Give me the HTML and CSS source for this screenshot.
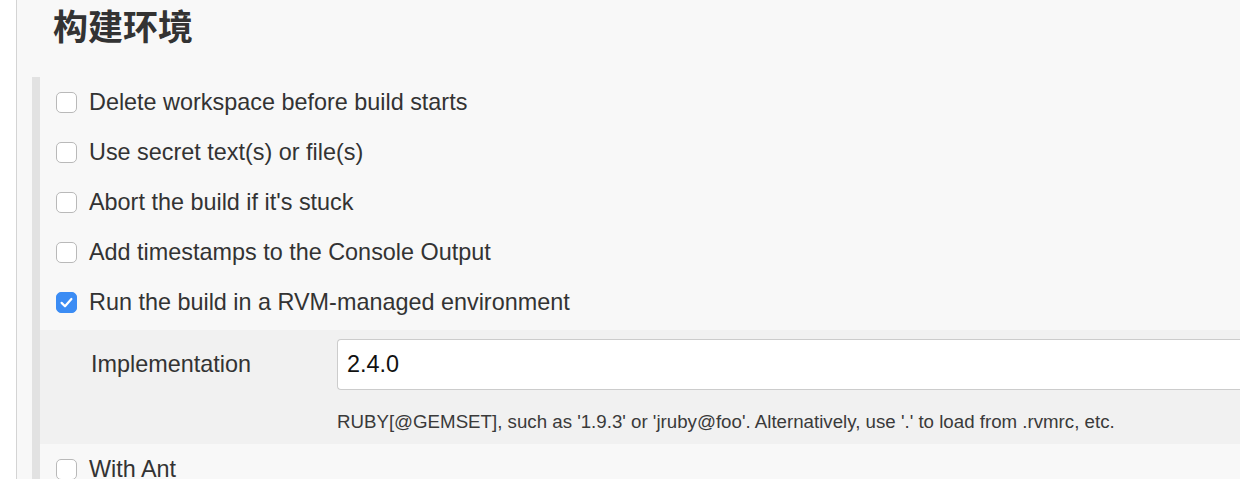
FILE: index.html
```html
<!DOCTYPE html>
<html lang="zh">
<head>
<meta charset="utf-8">
<title>构建环境</title>
<link rel="stylesheet" href="styles.css">
</head>
<body>
<div class="page">
  <h2 class="title">构建环境</h2>
  <div class="section">
    <label class="row"><span class="cb"></span><span class="lbl">Delete workspace before build starts</span></label>
    <label class="row"><span class="cb"></span><span class="lbl">Use secret text(s) or file(s)</span></label>
    <label class="row"><span class="cb"></span><span class="lbl">Abort the build if it's stuck</span></label>
    <label class="row"><span class="cb"></span><span class="lbl">Add timestamps to the Console Output</span></label>
    <label class="row"><span class="cb checked"><svg viewBox="0 0 21 21" width="21" height="21"><path d="M5.6 10.9 L9 14.3 L15.4 7" fill="none" stroke="#fff" stroke-width="2.2" stroke-linecap="round" stroke-linejoin="round"/></svg></span><span class="lbl">Run the build in a RVM-managed environment</span></label>
    <div class="sub">
      <div class="field">
        <div class="flabel">Implementation</div>
        <div class="finput">2.4.0</div>
      </div>
      <div class="help">RUBY[@GEMSET], such as '1.9.3' or 'jruby@foo'. Alternatively, use '.' to load from .rvmrc, etc.</div>
    </div>
    <label class="row"><span class="cb"></span><span class="lbl">With Ant</span></label>
  </div>
</div>
</body>
</html>
```

FILE: styles.css
```css
html, body {
  margin: 0;
  padding: 0;
  background: #ffffff;
  overflow: hidden;
}
body {
  font-family: "Liberation Sans", Arial, "Noto Sans CJK SC", sans-serif;
  color: #333333;
}
.page {
  margin-left: 16px;
  border-left: 1px solid #d4d4d4;
  background: #f8f8f8;
  min-height: 479px;
}
.title {
  margin: 0;
  padding: 2px 0 0 36px;
  height: 77px;
  box-sizing: border-box;
  font-family: "Noto Sans CJK SC", sans-serif;
  font-size: 35px;
  font-weight: 700;
  line-height: 46px;
  color: #333333;
}
.section {
  margin-left: 15px;
  border-left: 8px solid #e2e2e2;
}
.row {
  display: flex;
  align-items: center;
  height: 50px;
  padding-left: 16px;
  font-size: 23.4px;
}
.cb {
  width: 21px;
  height: 21px;
  box-sizing: border-box;
  border: 1px solid #b9b9b9;
  border-radius: 5px;
  background: #ffffff;
  margin-right: 12px;
  flex: none;
}
.cb svg { display: block; margin: -1px; }
.cb.checked {
  background: #3b8cf4;
  border-color: #3b8cf4;
}
.sub {
  margin-top: 3px;
  background: #f1f1f1;
  height: 114px;
  padding-top: 9px;
  box-sizing: border-box;
}
.field {
  display: grid;
  grid-template-columns: 246px 1fr;
  align-items: center;
  padding-left: 51px;
}
.flabel {
  font-size: 23.4px;
}
.finput {
  height: 51px;
  box-sizing: border-box;
  border: 1px solid #cccccc;
  border-right: none;
  border-radius: 4px 0 0 4px;
  background: #ffffff;
  padding-left: 9px;
  font-size: 23.4px;
  line-height: 49px;
  color: #111111;
}
.help {
  padding-left: 297px;
  margin-top: 21px;
  font-size: 18.7px;
  color: #3a3a3a;
}
```
